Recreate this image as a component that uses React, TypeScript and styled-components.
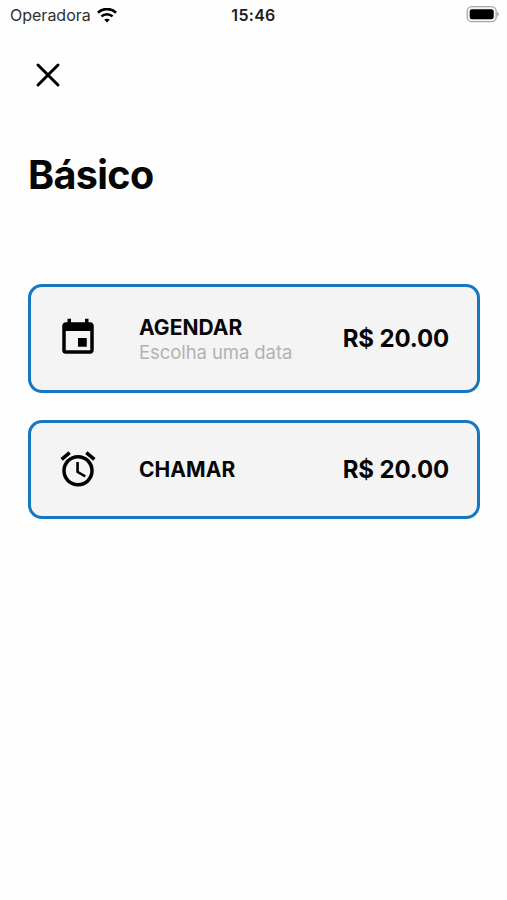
import React from "react";
import styled, { createGlobalStyle } from "styled-components";
import { MdAlarm, MdEvent } from "react-icons/md";

const GlobalStyle = createGlobalStyle`
  * { box-sizing: border-box; }
  body {
    margin: 0;
    background: #fefefe;
    color: #060606;
    font-family: Inter, "Liberation Sans", sans-serif;
  }
`;

const Screen = styled.div`
  width: 507px;
  height: 900px;
  overflow: hidden;
  display: flex;
  flex-direction: column;
`;

const StatusBar = styled.header`
  display: grid;
  grid-template-columns: 1fr auto 1fr;
  align-items: center;
  height: 30px;
  padding: 0 7px 0 10px;
`;

const Carrier = styled.div`
  display: flex;
  align-items: center;
  gap: 6px;
  font-size: 16px;
  line-height: 20px;
  color: #303030;
`;

const Clock = styled.div`
  padding-right: 3px;
  font-size: 16px;
  line-height: 20px;
  font-weight: 600;
  letter-spacing: 0.3px;
  color: #1c1c1c;
`;

const BatterySlot = styled.div`
  display: flex;
  justify-content: flex-end;
`;

const Main = styled.main`
  display: flex;
  flex-direction: column;
  padding: 31px 27px 0 28px;
`;

const CloseButton = styled.button`
  display: flex;
  width: 28px;
  height: 28px;
  margin-left: 6px;
  padding: 0;
  border: 0;
  background: none;
  color: #000;
`;

const Title = styled.h1`
  margin: 62px 0 0;
  font-size: 39.5px;
  line-height: 48px;
  font-weight: 700;
  letter-spacing: -0.65px;
`;

const Options = styled.div`
  display: flex;
  flex-direction: column;
  gap: 27px;
  margin-top: 85px;
`;

const Card = styled.button<{ $height: number }>`
  display: grid;
  grid-template-columns: 82px 1fr auto;
  align-items: center;
  width: 100%;
  height: ${(p) => p.$height}px;
  padding: 0 28px 0 26px;
  border: 3px solid #1577bf;
  border-radius: 14px;
  background: #f4f4f4;
  color: inherit;
  font-family: inherit;
  text-align: left;

  > svg {
    width: 42px;
    height: 42px;
    color: #000;
  }
`;

const Labels = styled.div<{ $stacked?: boolean }>`
  display: flex;
  flex-direction: column;
  padding-top: ${(p) => (p.$stacked ? 2 : 0)}px;
`;

const Name = styled.span`
  font-size: 21px;
  line-height: 25px;
  font-weight: 700;
  letter-spacing: 0.05px;
`;

const Hint = styled.span`
  font-size: 18.5px;
  line-height: 24px;
  letter-spacing: -0.08px;
  color: #b2b2b2;
`;

const Price = styled.span`
  padding-top: 2px;
  font-size: 24px;
  line-height: 30px;
  font-weight: 700;
  letter-spacing: -0.15px;
`;

const WifiIcon = () => (
  <svg width="20" height="15" viewBox="0 0 20 15" fill="none" stroke="#000">
    <path d="M1 4.8C6-.1 14-.1 19 4.8" strokeWidth="2.8" />
    <path d="M4.4 8.4c3.2-3 8-3 11.2 0" strokeWidth="2.5" />
    <path d="M10 14.4 7.2 11.7c1.6-1.4 4-1.4 5.6 0Z" fill="#000" stroke="none" />
  </svg>
);

const BatteryIcon = () => (
  <svg width="34" height="18" viewBox="0 0 34 18">
    <rect x="1.2" y="0.7" width="29" height="15" rx="4.5" fill="#f5f5f5" stroke="#a9a9a9" strokeWidth="1.3" />
    <rect x="3.7" y="3.2" width="24" height="10" rx="2.2" fill="#000" />
    <path d="M31.4 5.8c1.7.8 1.7 4.2 0 5Z" fill="#999" />
  </svg>
);

const CloseIcon = () => (
  <svg width="28" height="28" viewBox="0 0 28 28" stroke="currentColor" strokeWidth="3" strokeLinecap="round">
    <path d="M4 4 24 24M24 4 4 24" />
  </svg>
);

export default function App() {
  return (
    <Screen>
      <GlobalStyle />
      <StatusBar>
        <Carrier>
          Operadora
          <WifiIcon />
        </Carrier>
        <Clock>15:46</Clock>
        <BatterySlot>
          <BatteryIcon />
        </BatterySlot>
      </StatusBar>
      <Main>
        <CloseButton aria-label="Fechar">
          <CloseIcon />
        </CloseButton>
        <Title>Básico</Title>
        <Options>
          <Card $height={108.5}>
            <MdEvent />
            <Labels $stacked>
              <Name>AGENDAR</Name>
              <Hint>Escolha uma data</Hint>
            </Labels>
            <Price>R$ 20.00</Price>
          </Card>
          <Card $height={99}>
            <MdAlarm />
            <Labels>
              <Name>CHAMAR</Name>
            </Labels>
            <Price>R$ 20.00</Price>
          </Card>
        </Options>
      </Main>
    </Screen>
  );
}
